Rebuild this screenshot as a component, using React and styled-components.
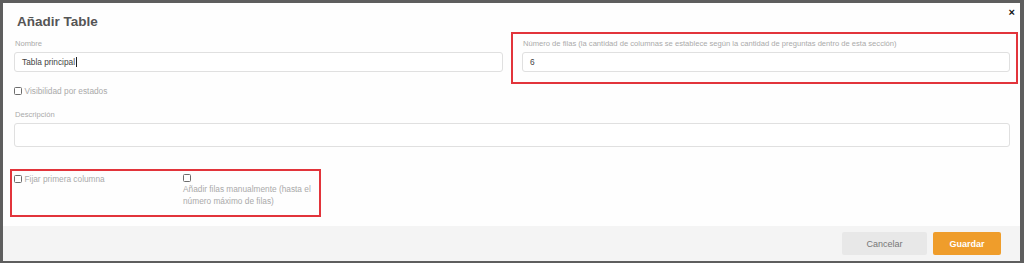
import React from "react";
import styled, { createGlobalStyle } from "styled-components";

const Global = createGlobalStyle`
  html, body { margin: 0; padding: 0; }
  body {
    background: #5e5e5e;
    font-family: "Liberation Sans", Arial, sans-serif;
    width: 1024px;
    height: 263px;
    overflow: hidden;
  }
`;

const Modal = styled.div`
  margin: 3px 4px 0 3px;
  height: 258px;
  background: #fefefe;
  display: flex;
  flex-direction: column;
  box-sizing: border-box;
`;

const Header = styled.div`
  display: flex;
  justify-content: space-between;
  align-items: flex-start;
  padding: 11px 5px 0 14px;
`;

const Title = styled.h1`
  margin: 0;
  font-size: 13.5px;
  line-height: 16px;
  font-weight: 700;
  color: #555;
`;

const Close = styled.span`
  font-size: 11px;
  line-height: 10px;
  font-weight: 700;
  color: #111;
  margin-top: -7px;
`;

const Body = styled.div`
  flex: 1;
  padding: 9px 10px 0 11px;
  display: flex;
  flex-direction: column;
`;

const Grid = styled.div`
  display: grid;
  grid-template-columns: 489px 488px;
  column-gap: 19px;
`;

const Field = styled.div`
  position: relative;
  display: flex;
  flex-direction: column;
  margin-top: ${(p) => p.$mt || 0}px;
`;

const Label = styled.label`
  font-size: 7.6px;
  line-height: 10px;
  color: #aaa;
  padding-left: 1px;
  margin-bottom: 3px;
  white-space: nowrap;
`;

const Input = styled.div`
  height: ${(p) => p.$h || 20}px;
  box-sizing: border-box;
  border: 1px solid #e0e0e0;
  border-radius: 3px;
  background: #fff;
  padding-left: 7px;
  display: flex;
  align-items: center;
  font-size: 8.3px;
  color: #444;
`;

const Caret = styled.span`
  display: inline-block;
  width: 1px;
  height: 10px;
  background: #222;
  margin-left: 0.5px;
`;

const Highlight = styled.div`
  position: absolute;
  pointer-events: none;
  border: 2px solid #e2343b;
  box-sizing: border-box;
  top: ${(p) => p.$top}px;
  left: ${(p) => p.$left}px;
  width: ${(p) => p.$w}px;
  height: ${(p) => p.$h}px;
`;

const CheckRow = styled.div`
  display: flex;
  align-items: center;
  gap: 2.5px;
  font-size: 8.3px;
  line-height: 10px;
  color: #aaa;
  margin-top: ${(p) => p.$mt || 0}px;
`;

const Box = styled.span`
  width: 8px;
  height: 8px;
  box-sizing: border-box;
  border: 1px solid #6d6d6d;
  border-radius: 1.5px;
  background: #fff;
  flex: none;
`;

const Options = styled.div`
  position: relative;
  display: grid;
  grid-template-columns: 169px 136px;
  align-items: start;
  margin-top: 27px;
`;

const StackedOption = styled.div`
  display: flex;
  flex-direction: column;
  align-items: flex-start;
  font-size: 8.3px;
  line-height: 11.7px;
  color: #aaa;
`;

const StackBox = styled(Box)`
  margin: 0 0 2px;
`;

const Footer = styled.div`
  height: 35px;
  background: #f4f4f4;
  display: flex;
  justify-content: flex-end;
  align-items: center;
  gap: 6px;
  padding-right: 19px;
`;

const Button = styled.button`
  height: 23px;
  border: none;
  border-radius: 2px;
  font-family: "Liberation Sans", Arial, sans-serif;
  font-size: 9px;
  width: ${(p) => p.$w}px;
  background: ${(p) => (p.$primary ? "#ef9d2b" : "#e8e8e8")};
  color: ${(p) => (p.$primary ? "#fff" : "#777")};
  font-weight: ${(p) => (p.$primary ? 700 : 400)};
  padding: 0;
`;

export default function App() {
  return (
    <>
      <Global />
      <Modal>
        <Header>
          <Title>Añadir Table</Title>
          <Close>×</Close>
        </Header>
        <Body>
          <Grid>
            <Field>
              <Label>Nombre</Label>
              <Input>
                Tabla principal
                <Caret />
              </Input>
            </Field>
            <Field>
              <Highlight $top={-7} $left={-11} $w={507} $h={52} />
              <Label>
                Número de filas (la cantidad de columnas se establece según la cantidad de preguntas dentro de esta sección)
              </Label>
              <Input>6</Input>
            </Field>
          </Grid>
          <CheckRow $mt={14}>
            <Box />
            Visibilidad por estados
          </CheckRow>
          <Field $mt={14}>
            <Label>Descripción</Label>
            <Input $h={24} />
          </Field>
          <Options>
            <Highlight $top={-5} $left={-4} $w={311} $h={48} />
            <CheckRow>
              <Box />
              Fijar primera columna
            </CheckRow>
            <StackedOption>
              <StackBox />
              Añadir filas manualmente (hasta el número máximo de filas)
            </StackedOption>
          </Options>
        </Body>
        <Footer>
          <Button $w={85}>Cancelar</Button>
          <Button $primary $w={68}>Guardar</Button>
        </Footer>
      </Modal>
    </>
  );
}
